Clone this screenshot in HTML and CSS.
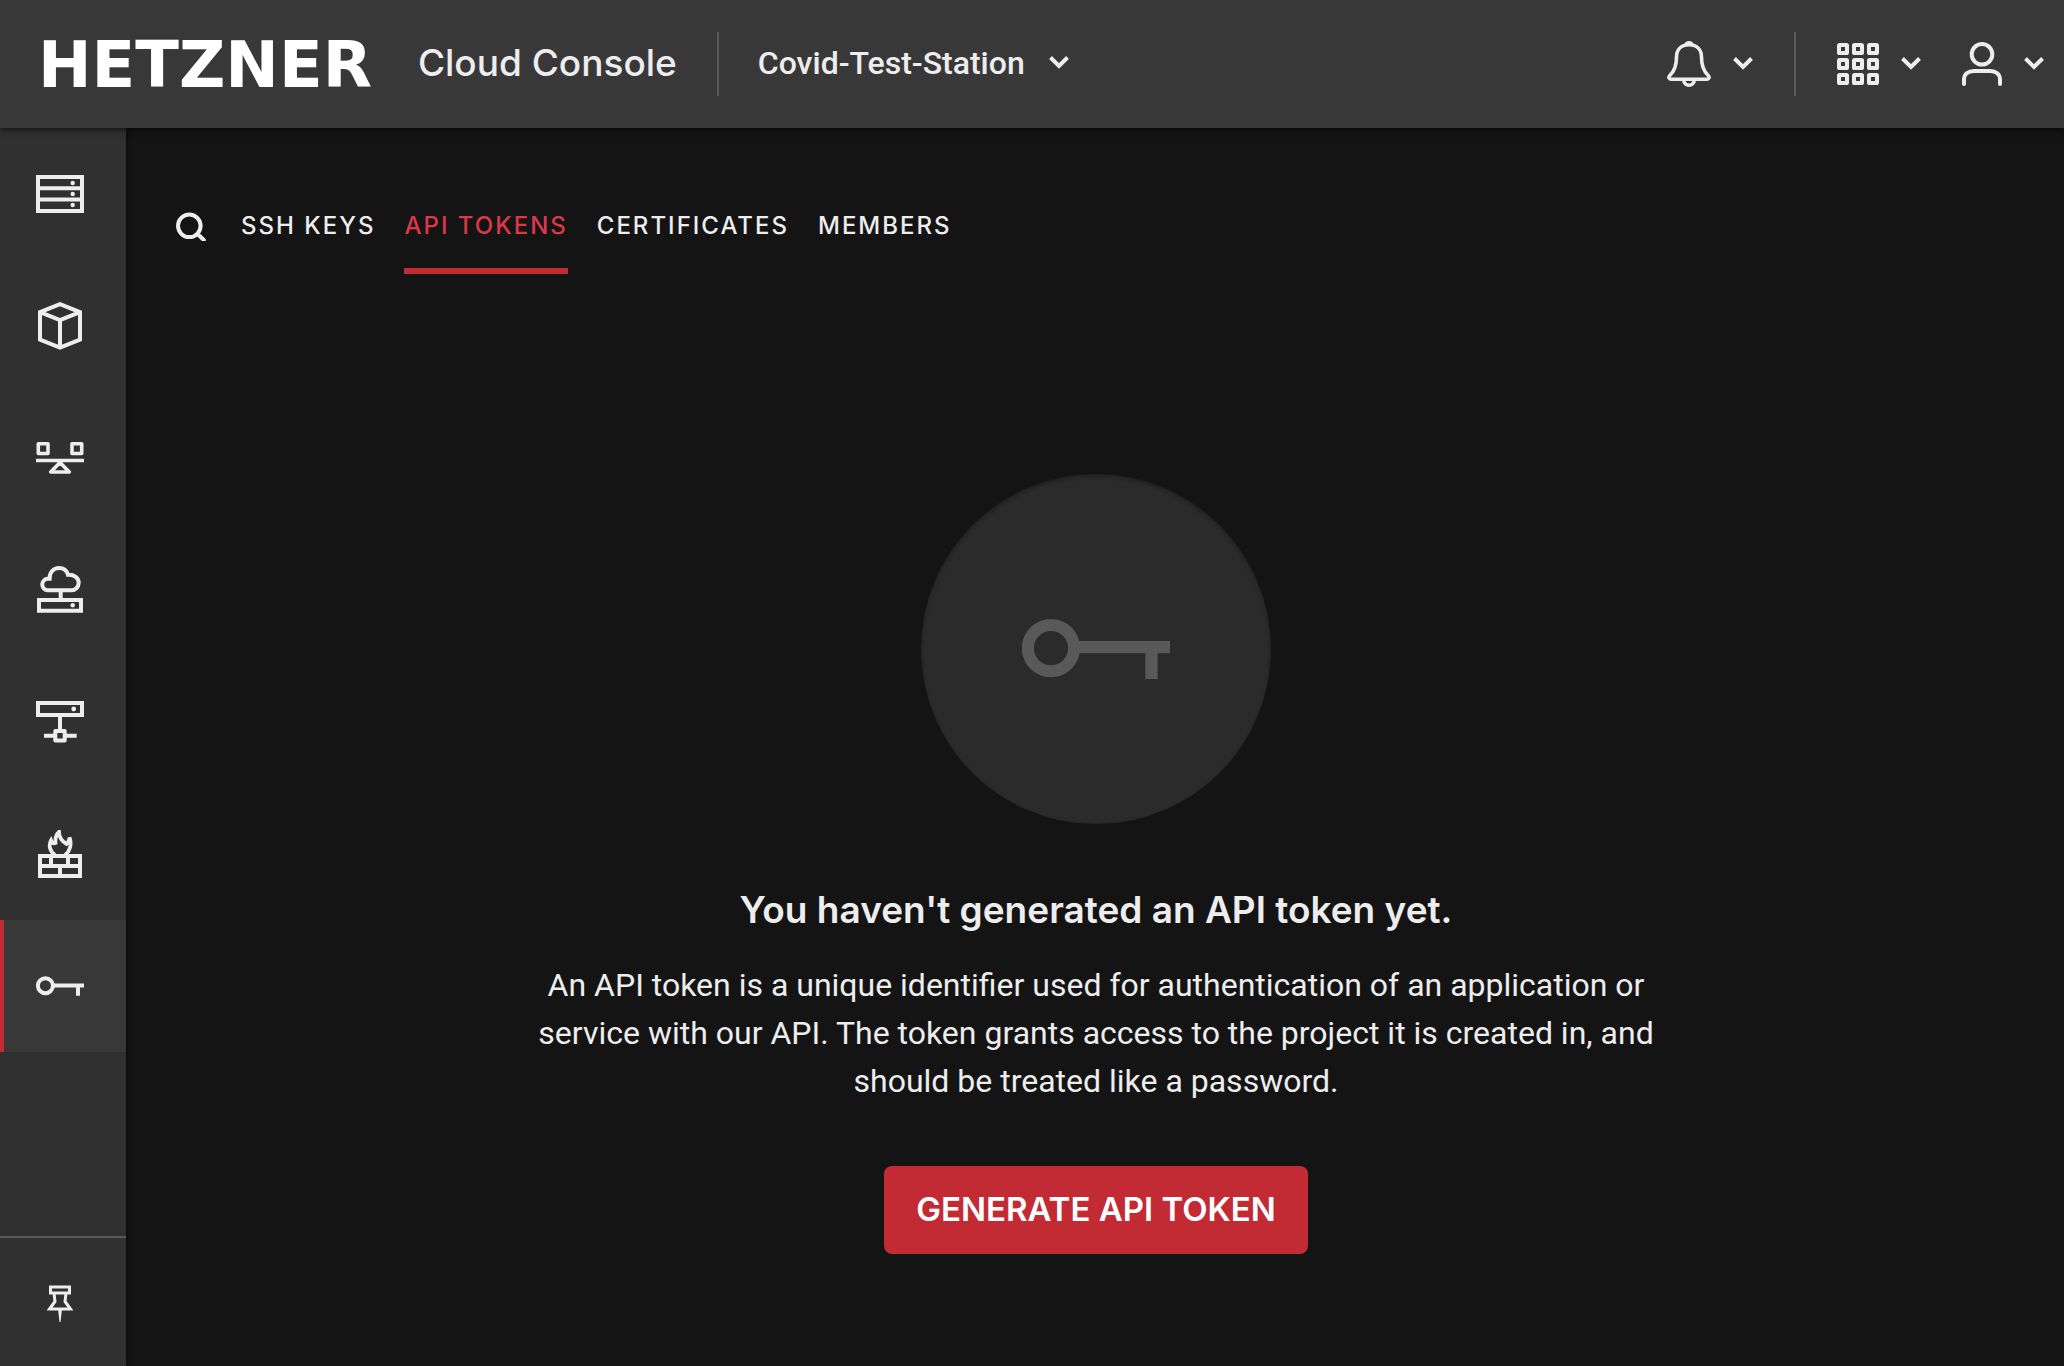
FILE: index.html
```html
<!DOCTYPE html>
<html lang="en">
<head>
<meta charset="utf-8">
<meta name="viewport" content="width=device-width, initial-scale=1">
<title>API Tokens - Hetzner Cloud Console</title>
<link rel="stylesheet" href="styles.css">
</head>
<body>
<svg class="sprite" aria-hidden="true">
  <symbol id="chevron" viewBox="0 0 20 14"><path d="M1.500 1.500 10 10l8.500-8.500" fill="none" stroke="currentColor" stroke-width="4"/></symbol>
  <symbol id="key" viewBox="0 0 48 48"><circle cx="9.400" cy="23.700" r="7.500" fill="none" stroke="currentColor" stroke-width="3.900"/><path d="M18 21.400h30v4h-4v8.300h-4v-8.300H18z" fill="currentColor"/></symbol>
</svg>

<header class="topbar">
  <a class="brand" href="#">
    <span class="wordmark">HETZNER</span>
    <span class="product">Cloud Console</span>
  </a>
  <span class="divider"></span>
  <button class="project" type="button">Covid-Test-Station <svg class="chevron"><use href="#chevron"/></svg></button>
  <div class="tools">
    <button class="tool" type="button" aria-label="Notifications">
      <svg class="tool-icon" viewBox="0 0 44 48" fill="none" stroke="currentColor" stroke-width="3.600" stroke-linejoin="round"><path d="M22 4.800c-8 0-12.500 5-12.500 12.500 0 9-2 13.700-6.500 18-2 2-1 4 1 4h36c2 0 3-2 1-4-4.500-4.300-6.500-9-6.500-18C34.500 9.800 30 4.800 22 4.800z"/><path d="M18.800 5.200a3.300 3.300 0 0 1 6.400 0" /><path d="M16.800 40a5.200 5.200 0 0 0 10.400 0"/></svg>
      <svg class="chevron"><use href="#chevron"/></svg>
    </button>
    <span class="divider"></span>
    <button class="tool" type="button" aria-label="Applications">
      <svg class="grid-icon" viewBox="0 0 42 42" fill="none" stroke="currentColor" stroke-width="4"><rect x="2" y="2" width="8" height="8" rx=".6"/><rect x="17" y="2" width="8" height="8" rx=".6"/><rect x="32" y="2" width="8" height="8" rx=".6"/><rect x="2" y="17" width="8" height="8" rx=".6"/><rect x="17" y="17" width="8" height="8" rx=".6"/><rect x="32" y="17" width="8" height="8" rx=".6"/><rect x="2" y="32" width="8" height="8" rx=".6"/><rect x="17" y="32" width="8" height="8" rx=".6"/><rect x="32" y="32" width="8" height="8" rx=".6"/></svg>
      <svg class="chevron"><use href="#chevron"/></svg>
    </button>
    <button class="tool" type="button" aria-label="Account">
      <svg class="user-icon" viewBox="0 0 40 44" fill="none" stroke="currentColor" stroke-width="4" stroke-linecap="round"><circle cx="20" cy="12.300" r="10.300"/><path d="M2 42v-4.500C2 32 6 29 12 29h16c6 0 10 3 10 8.500V42"/></svg>
      <svg class="chevron"><use href="#chevron"/></svg>
    </button>
  </div>
</header>

<div class="shell">
  <nav class="sidebar" aria-label="Project">
    <a class="side-link" href="#" aria-label="Servers"><svg class="side-icon" viewBox="0 0 48 48" fill="none" stroke="currentColor" stroke-width="4"><path d="M2 7h44v34H2zM2 18.300h44M2 29.500h44"/><g fill="currentColor" stroke="none"><circle cx="36.700" cy="13" r="2.200"/><circle cx="36.700" cy="24" r="2.200"/><circle cx="36.700" cy="35" r="2.200"/></g></svg></a>
    <a class="side-link" href="#" aria-label="Volumes"><svg class="side-icon" viewBox="0 0 48 48" fill="none" stroke="currentColor" stroke-width="4"><path d="M24 2.200l20 8v27.500l-20 8-20-8V10.200zM4 10.200l20 8 20-8M24 18v28"/></svg></a>
    <a class="side-link" href="#" aria-label="Load balancers"><svg class="side-icon" viewBox="0 0 48 48" fill="none" stroke="currentColor" stroke-width="3.600" stroke-linejoin="round"><path d="M2.300 9.800H12v9.700H2.300zM36 9.800h9.700v9.700H36zM0 26.500h48M24 28.500l9.300 9.500H14.700z"/></svg></a>
    <a class="side-link" href="#" aria-label="Floating IPs"><svg class="side-icon" viewBox="0 0 48 48" fill="none" stroke="currentColor" stroke-width="4"><path d="M11.300 24.300a5.800 5.800 0 0 1 0-11.500h2.300C13.300 6.500 17.500 2 23 2c4.500 0 7.800 2.700 9 6.800 6.200-.4 10.700 3.200 10.700 7.900 0 4.500-3.400 7.600-7.700 7.600zM24.700 25v8M3 34h42v10.700H3z"/><circle cx="36.700" cy="39.300" r="2.200" fill="currentColor" stroke="none"/></svg></a>
    <a class="side-link" href="#" aria-label="Networks"><svg class="side-icon" viewBox="0 0 48 48" fill="none" stroke="currentColor" stroke-width="4" stroke-linejoin="round"><path d="M24 18v14M8 37.700h10M30 37.700h10.700"/><path d="M2 5h44v12H2z" stroke-linejoin="miter"/><path d="M19.300 33h9.400v9.400h-9.400z"/><circle cx="37.700" cy="11" r="2.400" fill="currentColor" stroke="none"/></svg></a>
    <a class="side-link" href="#" aria-label="Firewalls"><svg class="side-icon" viewBox="0 0 48 48" fill="none" stroke="currentColor" stroke-width="4"><path d="M4 26h40v20H4zM4 36h40M15 26v10M32 26v10M24 36v10"/><path d="M19 25C13.500 21 12.500 15 15 10.500c1 2.700 2.500 3.300 4.500 2.500-.5-5 .8-8.500 3.500-11 0 6 3.500 9.500 7.500 12 2-1.500 3-3.500 3-6.500C36 14 34 21.500 29 25" stroke-width="3.800"/></svg></a>
    <a class="side-link active" href="#" aria-label="Security" aria-current="page"><svg class="side-icon"><use href="#key"/></svg></a>
    <button class="side-link pin" type="button" aria-label="Pin menu"><svg class="side-icon" viewBox="0 0 48 48" fill="none" stroke="currentColor" stroke-width="3"><path d="M14.500 9h19v6h-19zM18 15.500l1 8L13.500 31h21L29 23.500l1-8"/><path d="M22 31h4l-1.500 13h-1z" fill="currentColor" stroke="none"/></svg></button>
  </nav>

  <main class="content">
    <div class="tabs">
      <button class="search" type="button" aria-label="Search"><svg class="search-icon" viewBox="0 0 30 30" fill="none" stroke="currentColor" stroke-width="4" stroke-linecap="round"><circle cx="13.300" cy="14.800" r="11.300"/><path d="M21.500 23l6.300 6"/></svg></button>
      <a class="tab" href="#">SSH KEYS</a>
      <a class="tab current" href="#" aria-current="page">API TOKENS</a>
      <a class="tab" href="#">CERTIFICATES</a>
      <a class="tab" href="#">MEMBERS</a>
    </div>
    <section class="empty">
      <div class="badge"><svg class="badge-icon"><use href="#key"/></svg></div>
      <h1 class="title">You haven't generated an API token yet.</h1>
      <p class="lead">An API token is a unique identifier used for authentication of an application or service with our API. The token grants access to the project it is created in, and should be treated like a password.</p>
      <button class="generate" type="button">GENERATE API TOKEN</button>
    </section>
  </main>
</div>
</body>
</html>
```
FILE: styles.css
```css
* {
  box-sizing: border-box;
}

body {
  display: flex;
  flex-direction: column;
  min-height: 100vh;
  margin: 0;
  background: #141414;
  color: #ededed;
  font-family: Roboto, sans-serif;
  font-size: 32px;
}

a {
  color: inherit;
  text-decoration: none;
}

button {
  padding: 0;
  border: 0;
  background: none;
  color: inherit;
  font: inherit;
  cursor: pointer;
}

svg {
  display: block;
  flex: none;
}

.sprite {
  position: absolute;
  width: 0;
  height: 0;
}

/* Top bar */
.topbar {
  position: relative;
  display: flex;
  align-items: center;
  height: 128px;
  padding: 0 20px 0 38px;
  background: #383838;
  box-shadow: 0 2px 6px rgba(0, 0, 0, 0.6);
}

.brand {
  display: flex;
  align-items: center;
  gap: 46px;
  margin-right: 40px;
}

.wordmark {
  padding-top: 2px;
  color: #fff;
  font-family: "DejaVu Sans", sans-serif;
  font-size: 64px;
  font-weight: 700;
  line-height: 64px;
}

.product {
  padding-bottom: 2px;
  font-family: Inter, sans-serif;
  font-size: 37px;
  font-weight: 500;
  line-height: 48px;
}

.divider {
  width: 2px;
  height: 64px;
  background: #595959;
}

.project {
  display: flex;
  align-items: center;
  gap: 24px;
  margin-left: 39px;
  padding-bottom: 2px;
  font-weight: 500;
  line-height: 48px;
}

.chevron {
  width: 20px;
  height: 14px;
}

.tools {
  display: flex;
  align-items: center;
  gap: 41px;
  margin-left: auto;
}

.tool {
  display: flex;
  align-items: center;
  gap: 22px;
}

.tool-icon {
  width: 44px;
  height: 48px;
}

.grid-icon {
  width: 42px;
  height: 42px;
}

.user-icon {
  width: 40px;
  height: 44px;
}

/* Sidebar */
.shell {
  display: flex;
  flex: 1;
}

.sidebar {
  display: flex;
  flex-direction: column;
  width: 126px;
  background: #303030;
  box-shadow: 1px 0 4px rgba(0, 0, 0, 0.6);
}

.side-link {
  display: flex;
  align-items: center;
  justify-content: center;
  height: 132px;
  padding-right: 10px;
  border-left: 4px solid transparent;
}

.side-link.active {
  border-left-color: #c32b34;
  background: #383838;
}

.side-link.pin {
  height: 130px;
  margin-top: auto;
  padding-left: 4px;
  border-top: 2px solid #595959;
  border-left: 0;
}

.side-icon {
  width: 48px;
  height: 48px;
}

/* Content */
.content {
  flex: 1;
  padding: 83px 48px 48px 50px;
}

.tabs {
  display: flex;
  align-items: flex-start;
  gap: 29px;
  font-family: Inter, sans-serif;
  font-size: 24px;
  font-weight: 500;
  line-height: 30px;
  letter-spacing: 2px;
}

.search {
  margin-right: 6px;
}

.search-icon {
  width: 30px;
  height: 30px;
}

.tab {
  padding-bottom: 27px;
  border-bottom: 6px solid transparent;
}

.tab.current {
  border-bottom-color: #c32b34;
  color: #dc3848;
}

.empty {
  display: flex;
  flex-direction: column;
  align-items: center;
  margin-top: 200px;
  text-align: center;
}

.badge {
  display: flex;
  align-items: center;
  justify-content: center;
  width: 350px;
  height: 350px;
  border-radius: 50%;
  background: #2b2b2b;
  box-shadow: inset 0 2px 4px rgba(0, 0, 0, 0.3);
  color: #595959;
}

.badge-icon {
  width: 148px;
  height: 148px;
}

.title {
  margin: 62px 0 27px;
  font-family: Inter, sans-serif;
  font-size: 37px;
  font-weight: 600;
  line-height: 48px;
}

.lead {
  max-width: 1160px;
  margin: 0 0 61px;
  line-height: 48px;
}

.generate {
  height: 88px;
  padding: 0 32px 2px;
  border-radius: 8px;
  background: #c32b34;
  color: #fff;
  font-family: Inter, sans-serif;
  font-size: 33px;
  font-weight: 600;
}
```
